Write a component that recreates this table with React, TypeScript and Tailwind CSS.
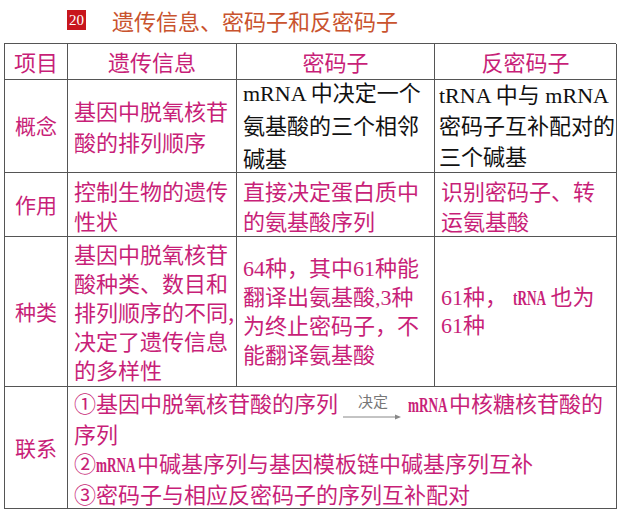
const sans = { fontFamily: '"Noto Sans CJK SC", "Noto Sans", sans-serif' };
const serif = { fontFamily: '"Liberation Serif", "Noto Sans CJK SC", serif' };

function Cell({
  children,
  className = "",
  font = sans,
}: {
  children: React.ReactNode;
  className?: string;
  font?: React.CSSProperties;
}) {
  return (
    <div
      className={`flex items-center border-r border-b border-[#555] whitespace-nowrap ${className}`}
      style={font}
    >
      {children}
    </div>
  );
}

function Label({ text }: { text: string }) {
  return (
    <Cell className="justify-center text-[21px] text-[#c81f78]">{text}</Cell>
  );
}

function Head({ text }: { text: string }) {
  return (
    <Cell className="justify-center text-[22px] text-[#c81f78]">{text}</Cell>
  );
}

// narrow serif "mRNA" like the condensed latin in the source picture
function Narrow({ text, w }: { text: string; w: string }) {
  return (
    <span className={`inline-block font-bold ${w}`} style={serif}>
      <span className="inline-block origin-left scale-x-[0.6]">{text}</span>
    </span>
  );
}

function Arrow() {
  return (
    <span className="relative inline-block mx-[10px] w-[50px] text-center text-[15px] leading-[26px] text-[#777] align-top">
      决定
      <svg
        className="absolute left-[-5px] top-[25px]"
        width="60"
        height="8"
        viewBox="0 0 60 8"
      >
        <line x1="0" y1="4" x2="54" y2="4" stroke="#888" strokeWidth="1" />
        <path d="M52 1.5 L58 4 L52 6.5 Z" fill="#888" />
      </svg>
    </span>
  );
}

export default function App() {
  return (
    <div className="w-[640px] h-[516px] bg-white overflow-hidden">
      <div className="flex items-center h-[43px] pl-[67px] pb-[3px]">
        <span
          className="flex items-center justify-center w-[19px] h-[20px] bg-[#c8161d] text-white text-[15px] leading-none"
          style={serif}
        >
          20
        </span>
        <span
          className="ml-[26px] text-[22px] leading-none text-[#c9532e]"
          style={sans}
        >
          遗传信息、密码子和反密码子
        </span>
      </div>

      <div className="ml-[4px] w-[612px] grid grid-cols-[63px_169px_198px_182px] grid-rows-[36px_93px_64px_150px_122px] border-l border-t border-[#555]">
        <Head text="项目" />
        <Head text="遗传信息" />
        <Head text="密码子" />
        <Head text="反密码子" />

        <Label text="概念" />
        <Cell className="pl-[6px] text-[22px] leading-[31px] text-[#c81f78]">
          <div>
            基因中脱氧核苷
            <br />
            酸的排列顺序
          </div>
        </Cell>
        <Cell
          className="pl-[6px] text-[22px] leading-[33px] text-[#111]"
          font={serif}
        >
          <div>
            mRNA 中决定一个
            <br />
            氨基酸的三个相邻
            <br />
            碱基
          </div>
        </Cell>
        <Cell
          className="pl-[4px] text-[22px] leading-[31px] text-[#111]"
          font={serif}
        >
          <div>
            tRNA 中与 mRNA
            <br />
            密码子互补配对的
            <br />
            三个碱基
          </div>
        </Cell>

        <Label text="作用" />
        <Cell className="pl-[6px] text-[22px] leading-[30px] text-[#c81f78]">
          <div>
            控制生物的遗传
            <br />
            性状
          </div>
        </Cell>
        <Cell className="pl-[6px] text-[22px] leading-[30px] text-[#c81f78]">
          <div>
            直接决定蛋白质中
            <br />
            的氨基酸序列
          </div>
        </Cell>
        <Cell className="pl-[6px] text-[22px] leading-[30px] text-[#c81f78]">
          <div>
            识别密码子、转
            <br />
            运氨基酸
          </div>
        </Cell>

        <Label text="种类" />
        <Cell className="pl-[6px] text-[22px] leading-[29px] text-[#c81f78]">
          <div>
            基因中脱氧核苷
            <br />
            酸种类、数目和
            <br />
            排列顺序的不同,
            <br />
            决定了遗传信息
            <br />
            的多样性
          </div>
        </Cell>
        <Cell
          className="pl-[6px] text-[22px] leading-[29px] text-[#c81f78]"
          font={serif}
        >
          <div>
            64种，其中61种能
            <br />
            翻译出氨基酸,3种
            <br />
            为终止密码子，不
            <br />
            能翻译氨基酸
          </div>
        </Cell>
        <Cell
          className="pl-[6px] text-[22px] leading-[28px] text-[#c81f78]"
          font={serif}
        >
          <div>
            61种， <Narrow text="tRNA" w="w-[38px]" />也为
            <br />
            61种
          </div>
        </Cell>

        <Label text="联系" />
        <Cell className="col-span-3 pl-[6px] text-[22px] leading-[29px] text-[#c81f78]">
          <div>
            <div>
              ①基因中脱氧核苷酸的序列
              <Arrow />
              <Narrow text="mRNA" w="w-[41px]" />
              中核糖核苷酸的
            </div>
            <div>序列</div>
            <div>
              ②<Narrow text="mRNA" w="w-[41px]" />
              中碱基序列与基因模板链中碱基序列互补
            </div>
            <div>③密码子与相应反密码子的序列互补配对</div>
          </div>
        </Cell>
      </div>
    </div>
  );
}
